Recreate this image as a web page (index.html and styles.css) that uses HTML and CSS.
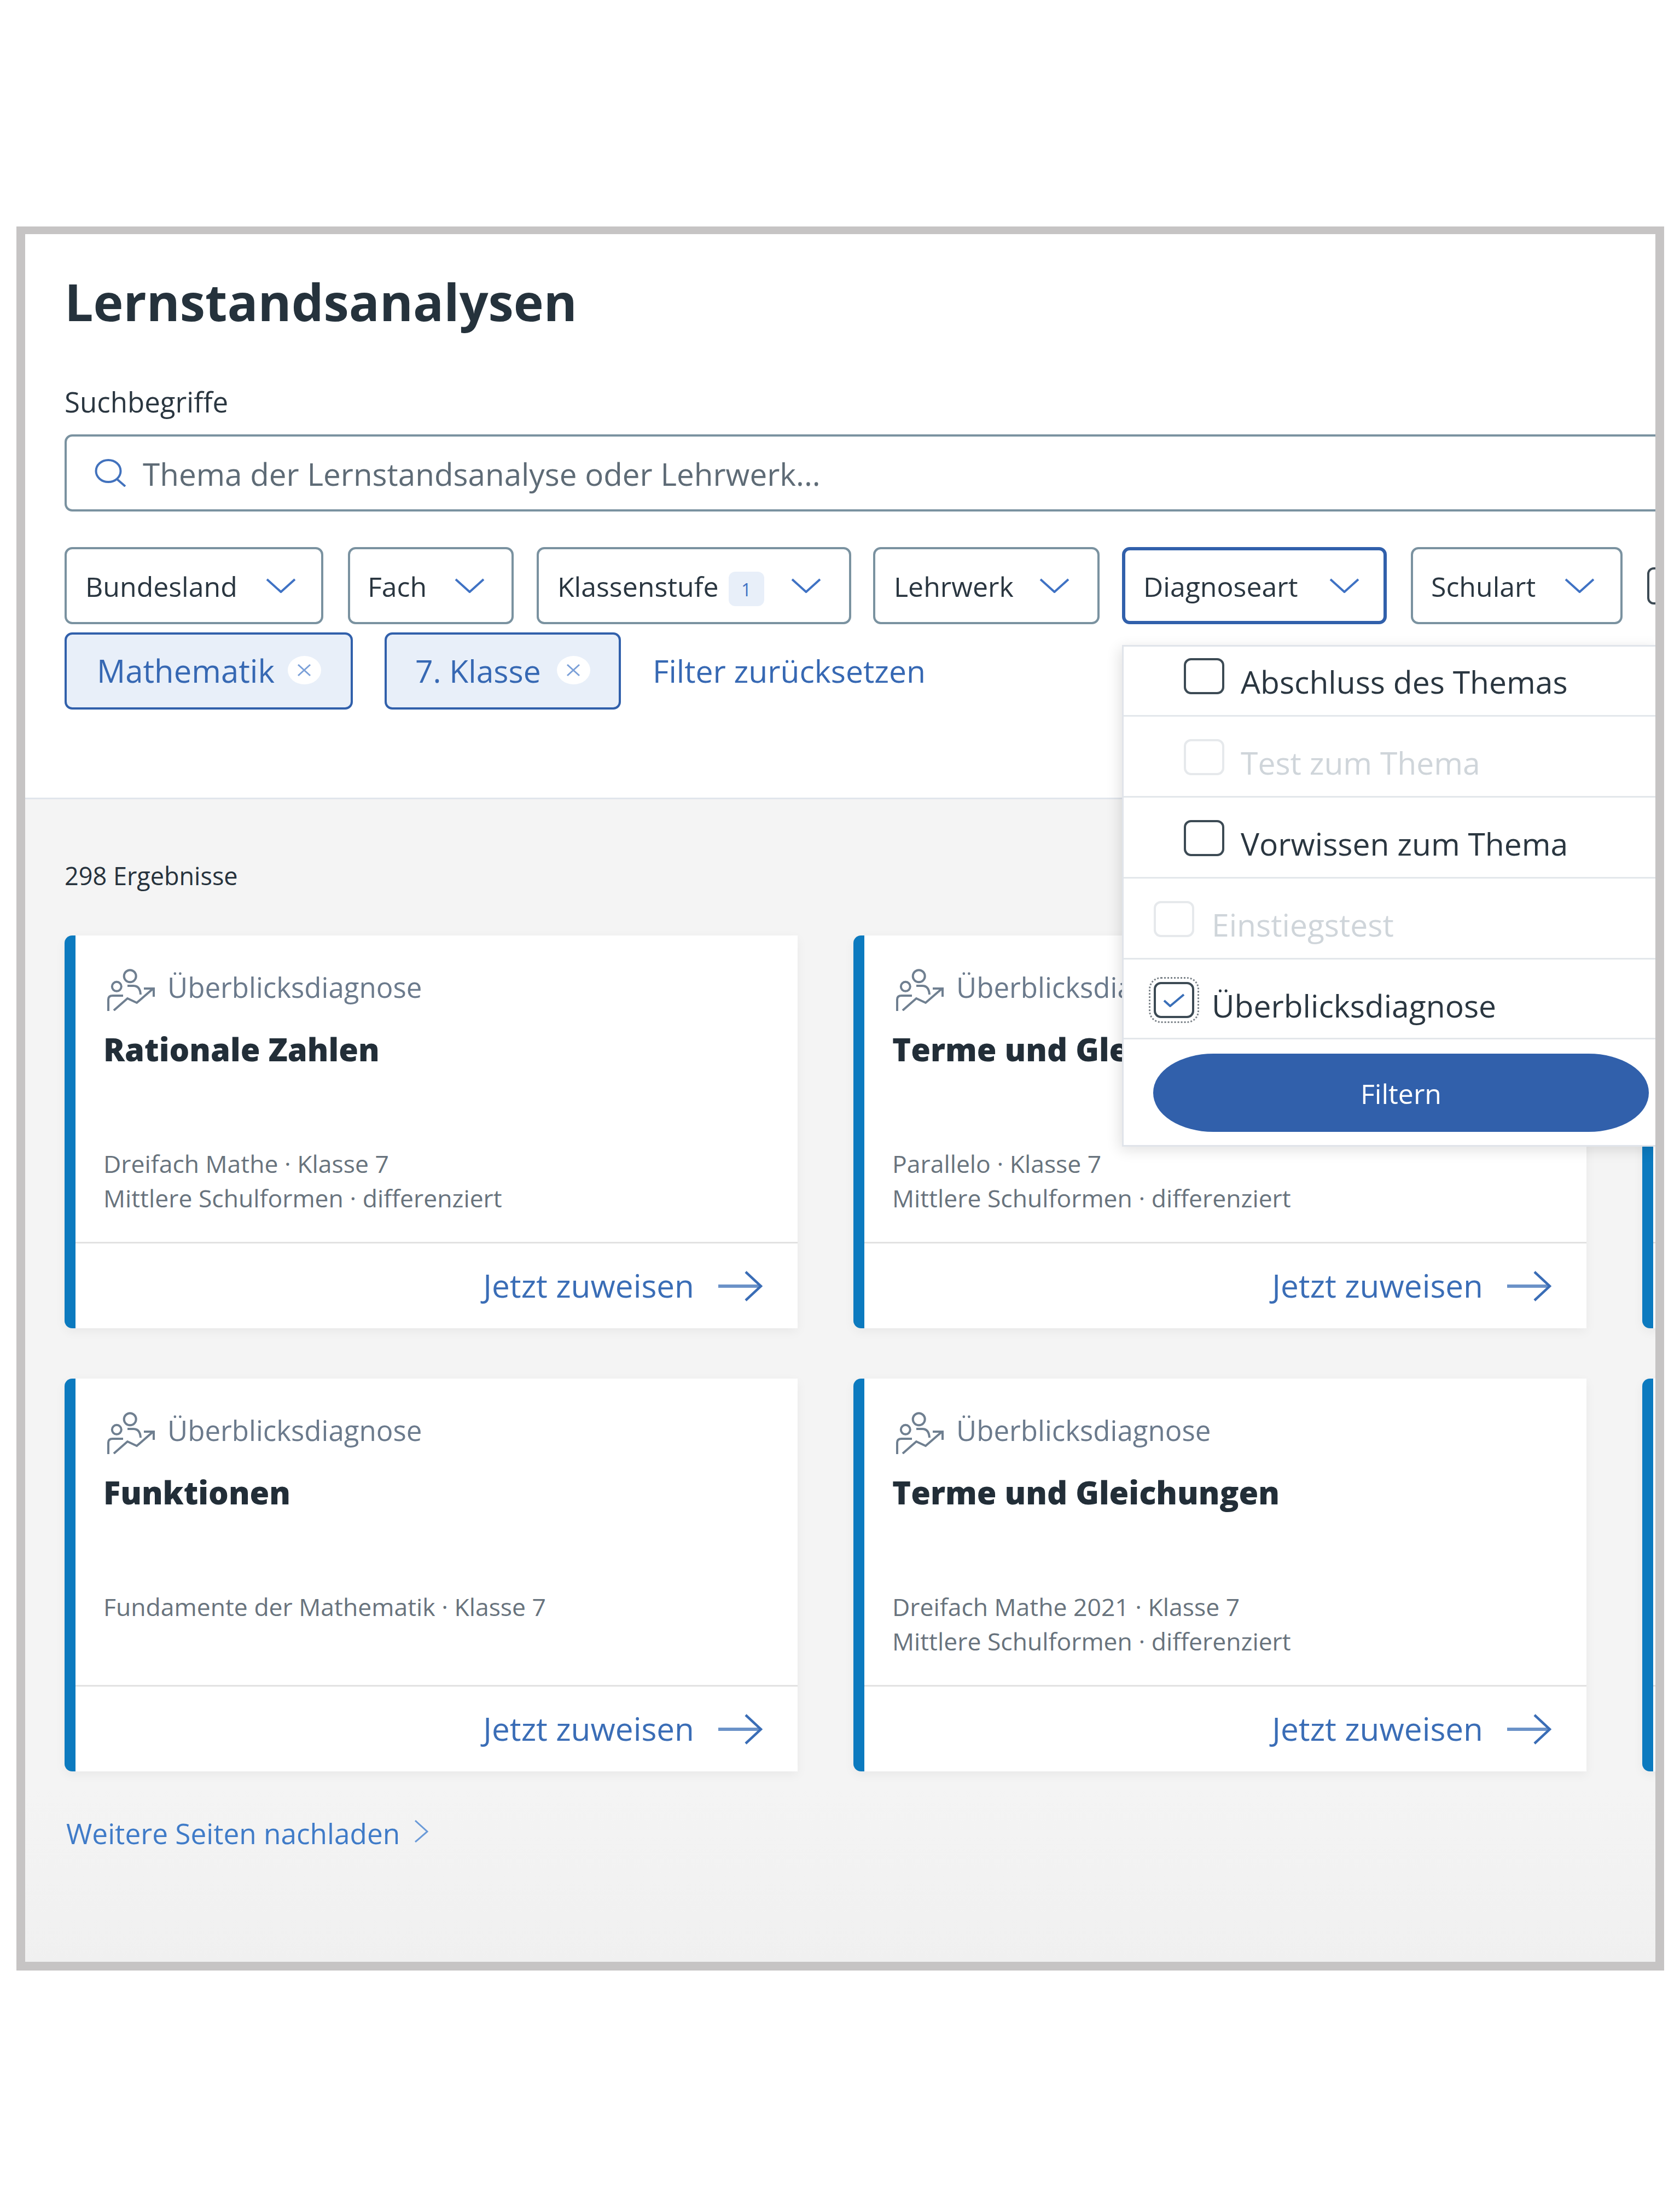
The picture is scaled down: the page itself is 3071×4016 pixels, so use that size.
FILE: index.html
```html
<!doctype html>
<html lang="de">
<head>
<meta charset="utf-8">
<title>Lernstandsanalysen</title>
<link rel="stylesheet" href="styles.css">
</head>
<body>
<svg class="defs" width="0" height="0" aria-hidden="true">
  <symbol id="chev" viewBox="0 0 55 27"><path d="M2 2 L27.5 25 L53 2" fill="none" stroke="currentColor" stroke-width="4"/></symbol>
  <symbol id="arrow" viewBox="0 0 81 56"><path d="M0 28 H78" fill="none" stroke="currentColor" stroke-opacity=".75" stroke-width="6"/><path d="M50 2 L78 28 L50 54" fill="none" stroke="currentColor" stroke-width="4.5"/></symbol>
  <symbol id="x" viewBox="0 0 26 24"><path d="M2 2 L24 22 M24 2 L2 22" fill="none" stroke="currentColor" stroke-width="3"/></symbol>
  <symbol id="person" viewBox="0 0 87 78">
    <g fill="none" stroke="currentColor" stroke-width="4">
      <circle cx="41.7" cy="14.3" r="11"/>
      <circle cx="17.3" cy="33.3" r="8.5"/>
      <path d="M37 32 H48 Q60 32 61 48"/>
      <path d="M2 78 V57 Q2 50 10 50 H29"/>
      <path d="M12 77 L37 55 L54 63 L84 37"/>
      <path d="M67 37 H85 V52"/>
    </g>
  </symbol>
</svg>
<main class="frame">
  <header class="head">
    <h1 class="title">Lernstandsanalysen</h1>
    <label class="label">Suchbegriffe</label>
    <div class="search">
      <svg class="search-icon" viewBox="0 0 57 51"><ellipse cx="25" cy="22" rx="22.5" ry="20" fill="none" stroke="currentColor" stroke-width="4"/><path d="M41 37 L56 50" fill="none" stroke="currentColor" stroke-width="4"/></svg>
      <span class="placeholder">Thema der Lernstandsanalyse oder Lehrwerk...</span>
    </div>
    <div class="filters">
      <button class="filter f-bund"><span class="filter-text">Bundesland</span><svg class="chev"><use href="#chev"/></svg></button>
      <button class="filter f-fach"><span class="filter-text">Fach</span><svg class="chev"><use href="#chev"/></svg></button>
      <button class="filter f-klas"><span class="filter-text">Klassenstufe</span><span class="badge">1</span><svg class="chev"><use href="#chev"/></svg></button>
      <button class="filter f-lehr"><span class="filter-text">Lehrwerk</span><svg class="chev"><use href="#chev"/></svg></button>
      <button class="filter f-diag"><span class="filter-text">Diagnoseart</span><svg class="chev"><use href="#chev"/></svg></button>
      <button class="filter f-schu"><span class="filter-text">Schulart</span><svg class="chev"><use href="#chev"/></svg></button>
      <span class="more-box"></span>
    </div>
    <div class="chips">
      <div class="chip chip-math"><span class="chip-text">Mathematik</span><span class="chip-x"><svg><use href="#x"/></svg></span></div>
      <div class="chip chip-klasse"><span class="chip-text">7. Klasse</span><span class="chip-x"><svg><use href="#x"/></svg></span></div>
      <a class="reset">Filter zurücksetzen</a>
    </div>
  </header>

  <section class="results">
    <p class="count">298 Ergebnisse</p>
    <div class="grid">
      <article class="card">
        <div class="card-body">
          <div class="kind"><svg class="kind-icon"><use href="#person"/></svg><span>Überblicksdiagnose</span></div>
          <h2 class="card-title">Rationale Zahlen</h2>
          <p class="meta">Dreifach Mathe · Klasse 7<br>Mittlere Schulformen · differenziert</p>
        </div>
        <div class="card-foot"><span class="assign">Jetzt zuweisen</span><svg class="arrow"><use href="#arrow"/></svg></div>
      </article>
      <article class="card">
        <div class="card-body">
          <div class="kind"><svg class="kind-icon"><use href="#person"/></svg><span>Überblicksdiagnose</span></div>
          <h2 class="card-title">Terme und Gleichungen</h2>
          <p class="meta">Parallelo · Klasse 7<br>Mittlere Schulformen · differenziert</p>
        </div>
        <div class="card-foot"><span class="assign">Jetzt zuweisen</span><svg class="arrow"><use href="#arrow"/></svg></div>
      </article>
      <article class="card">
        <div class="card-body"></div>
        <div class="card-foot"></div>
      </article>
      <article class="card">
        <div class="card-body">
          <div class="kind"><svg class="kind-icon"><use href="#person"/></svg><span>Überblicksdiagnose</span></div>
          <h2 class="card-title">Funktionen</h2>
          <p class="meta">Fundamente der Mathematik · Klasse 7</p>
        </div>
        <div class="card-foot"><span class="assign">Jetzt zuweisen</span><svg class="arrow"><use href="#arrow"/></svg></div>
      </article>
      <article class="card">
        <div class="card-body">
          <div class="kind"><svg class="kind-icon"><use href="#person"/></svg><span>Überblicksdiagnose</span></div>
          <h2 class="card-title">Terme und Gleichungen</h2>
          <p class="meta">Dreifach Mathe 2021 · Klasse 7<br>Mittlere Schulformen · differenziert</p>
        </div>
        <div class="card-foot"><span class="assign">Jetzt zuweisen</span><svg class="arrow"><use href="#arrow"/></svg></div>
      </article>
      <article class="card">
        <div class="card-body"></div>
        <div class="card-foot"></div>
      </article>
    </div>
    <a class="more">Weitere Seiten nachladen<svg class="more-chev" viewBox="0 0 26 41"><path d="M2 1 L24 21 L2 40" fill="none" stroke="currentColor" stroke-width="3"/></svg></a>
  </section>

  <div class="dropdown">
    <ul class="list">
      <li class="row"><span class="box"></span><span class="opt">Abschluss des Themas</span></li>
      <li class="row is-off"><span class="box"></span><span class="opt">Test zum Thema</span></li>
      <li class="row"><span class="box"></span><span class="opt">Vorwissen zum Thema</span></li>
      <li class="row row-top is-off"><span class="box"></span><span class="opt">Einstiegstest</span></li>
      <li class="row row-top"><span class="box is-checked"><svg viewBox="0 0 40 26"><path d="M2 14 L13 24 L38 3" fill="none" stroke="currentColor" stroke-width="4"/></svg></span><span class="opt">Überblicksdiagnose</span></li>
    </ul>
    <button class="apply">Filtern</button>
  </div>
</main>
</body>
</html>
```
FILE: styles.css
```css
* { box-sizing: border-box; }
html, body { margin: 0; padding: 0; }
body {
  height: 4016px;
  padding-top: 414px;
  overflow: hidden;
  background: #fff;
  color: #26323c;
  font-family: "Open Sans", "Noto Sans", sans-serif;
}
.defs { position: absolute; }
button { font-family: inherit; cursor: pointer; }
p, h1, h2, ul { margin: 0; padding: 0; }

.frame {
  position: relative;
  z-index: 0;
  width: 3012px;
  height: 3188px;
  margin-left: 30px;
  border: solid #c6c4c4;
  border-width: 14px 16px 16px;
  overflow: hidden;
  background: #fff;
}

/* header */
.head {
  height: 1033px;
  padding: 63px 0 0 72px;
  border-bottom: 3px solid #e1e6ec;
}
.title {
  font-size: 93px;
  line-height: 120px;
  font-weight: 700;
  color: #25323c;
}
.label {
  display: block;
  margin-top: 93px;
  font-size: 51px;
  line-height: 60px;
  color: #2a3640;
}
.search {
  display: flex;
  align-items: center;
  gap: 31px;
  width: 3000px;
  height: 141px;
  margin-top: 30px;
  padding-left: 51px;
  border: 4px solid #7a92a0;
  border-radius: 14px;
}
.search-icon { width: 57px; height: 51px; color: #4272bd; }
.placeholder { padding-top: 3px; font-size: 56.6px; color: #5e6b76; }

.filters {
  display: flex;
  align-items: center;
  width: 3000px;
  height: 141px;
  margin-top: 65px;
}
.filter {
  display: flex;
  align-items: center;
  height: 141px;
  padding: 0 48px 0 34px;
  border: 4px solid #7a92a0;
  border-radius: 14px;
  background: #fff;
  font-size: 50px;
  color: #2a3640;
}
.filter-text { padding-top: 3px; }
.chev { width: 55px; height: 27px; margin-left: auto; color: #3f72c4; }
.f-bund { width: 473px; margin-right: 45px; padding-right: 46px; }
.f-fach { width: 303px; margin-right: 42px; padding-left: 32px; padding-right: 49px; }
.f-klas { width: 575px; margin-right: 40px; padding-right: 51px; }
.f-lehr { width: 414px; margin-right: 41px; padding-left: 34px; padding-right: 51px; }
.f-diag { width: 484px; margin-right: 44px; padding: 0 44px 0 33px; border: 6px solid #3160ab; }
.f-schu { width: 387px; margin-right: 45px; padding-left: 33px; padding-right: 47px; }
.badge {
  width: 65px;
  height: 63px;
  margin: 12px 0 0 18px;
  border-radius: 12px;
  background: #e8eff9;
  color: #3f72c4;
  font-size: 32px;
  line-height: 66px;
  text-align: center;
}
.more-box {
  flex: none;
  width: 74px;
  height: 68px;
  border: 4px solid #3c4a54;
  border-radius: 12px;
}

.chips {
  display: flex;
  align-items: center;
  gap: 58px;
  height: 141px;
  margin-top: 15px;
}
.chip {
  display: flex;
  align-items: center;
  height: 141px;
  border: 4px solid #3160ab;
  border-radius: 14px;
  background: #e8eff9;
  color: #3668b3;
}
.chip-math { gap: 24px; width: 527px; padding-left: 55px; font-size: 58px; }
.chip-klasse { gap: 29px; width: 432px; padding-left: 52px; font-size: 57px; }
.chip-text { padding-bottom: 2px; }
.chip-x {
  display: flex;
  align-items: center;
  justify-content: center;
  width: 61px;
  height: 52px;
  margin-bottom: 4px;
  border-radius: 50%;
  background: #fff;
  color: #7ba0d8;
}
.chip-x svg { width: 26px; height: 24px; }
.reset { padding-bottom: 2px; font-size: 57px; color: #3668b3; }

/* results */
.results {
  height: 2125px;
  padding: 110px 0 0 72px;
  background: linear-gradient(#f4f4f4 85%, #f0f0f0);
}
.count { font-size: 45px; line-height: 60px; color: #26323c; }
.grid {
  display: grid;
  grid-template-columns: repeat(3, 1340px);
  grid-auto-rows: 718px;
  column-gap: 102px;
  row-gap: 92px;
  margin-top: 79px;
}
.card {
  display: flex;
  flex-direction: column;
  border-left: 20px solid #0c7abf;
  border-radius: 14px 0 0 14px;
  background: #fff;
  box-shadow: 0 6px 20px rgba(0, 0, 0, .05);
}
.card-body {
  height: 500px;
  padding: 60px 0 0 51px;
  border-bottom: 3px solid #e2e2e2;
  box-sizing: content-box;
}
.kind {
  display: flex;
  align-items: flex-start;
  gap: 23px;
  height: 78px;
  margin-left: 7px;
  font-size: 51px;
  line-height: 60px;
  color: #6b7a8c;
}
.kind span { margin-top: 4px; }
.kind-icon { width: 87px; height: 78px; color: #6f7f90; }
.card-title {
  margin-top: 35px;
  font-size: 57.8px;
  line-height: 70px;
  font-weight: 800;
  color: #222e38;
}
.meta {
  margin-top: 142px;
  font-size: 44.5px;
  line-height: 63.4px;
  color: #68737d;
}
.card-foot {
  display: flex;
  align-items: center;
  justify-content: flex-end;
  gap: 44px;
  flex: 1;
  padding-right: 64px;
}
.assign { padding-bottom: 4px; font-size: 58.5px; color: #3a6db6; }
.arrow { width: 81px; height: 56px; color: #3a6db6; }
.more {
  display: inline-flex;
  align-items: flex-start;
  gap: 26px;
  margin: 81px 0 0 3px;
  padding-top: 2px;
  font-size: 51.3px;
  line-height: 60px;
  color: #3f7bc8;
}
.more-chev { width: 26px; height: 41px; margin-top: 6px; color: #6a9ad8; }

/* dropdown */
.dropdown {
  position: absolute;
  left: 2005px;
  top: 751px;
  width: 980px;
  height: 917px;
  border: 3px solid #e0e4ea;
  border-right: 0;
  overflow: hidden;
  background: #fff;
  box-shadow: -4px 6px 24px rgba(0, 0, 0, .12);
}
.list { margin-top: -20px; list-style: none; }
.row {
  display: flex;
  align-items: flex-start;
  gap: 30px;
  height: 148px;
  padding-left: 110px;
  border-bottom: 3px solid #e3e7eb;
  font-size: 57px;
  line-height: 70px;
  color: #2a3640;
}
.row:last-child { height: 146px; }
.row-top { padding-left: 55px; gap: 32px; }
.box {
  display: flex;
  align-items: center;
  justify-content: center;
  flex: none;
  width: 74px;
  height: 66px;
  margin-top: 40.5px;
  border: 4px solid #3c4a54;
  border-radius: 13px;
  color: #3a6fb8;
}
.opt { margin-top: 48.5px; }
.box svg { width: 40px; height: 26px; }
.box.is-checked { outline: 3px dotted #7b8288; outline-offset: 6px; }
.is-off { color: #cfd5da; }
.is-off .box { border-color: #e6e9ec; }
.apply {
  display: block;
  width: 906px;
  height: 143px;
  margin: 26px 0 0 54px;
  padding-top: 3px;
  border: 0;
  border-radius: 110px / 71px;
  background: #3160ab;
  color: #fff;
  font-size: 50px;
}
```
